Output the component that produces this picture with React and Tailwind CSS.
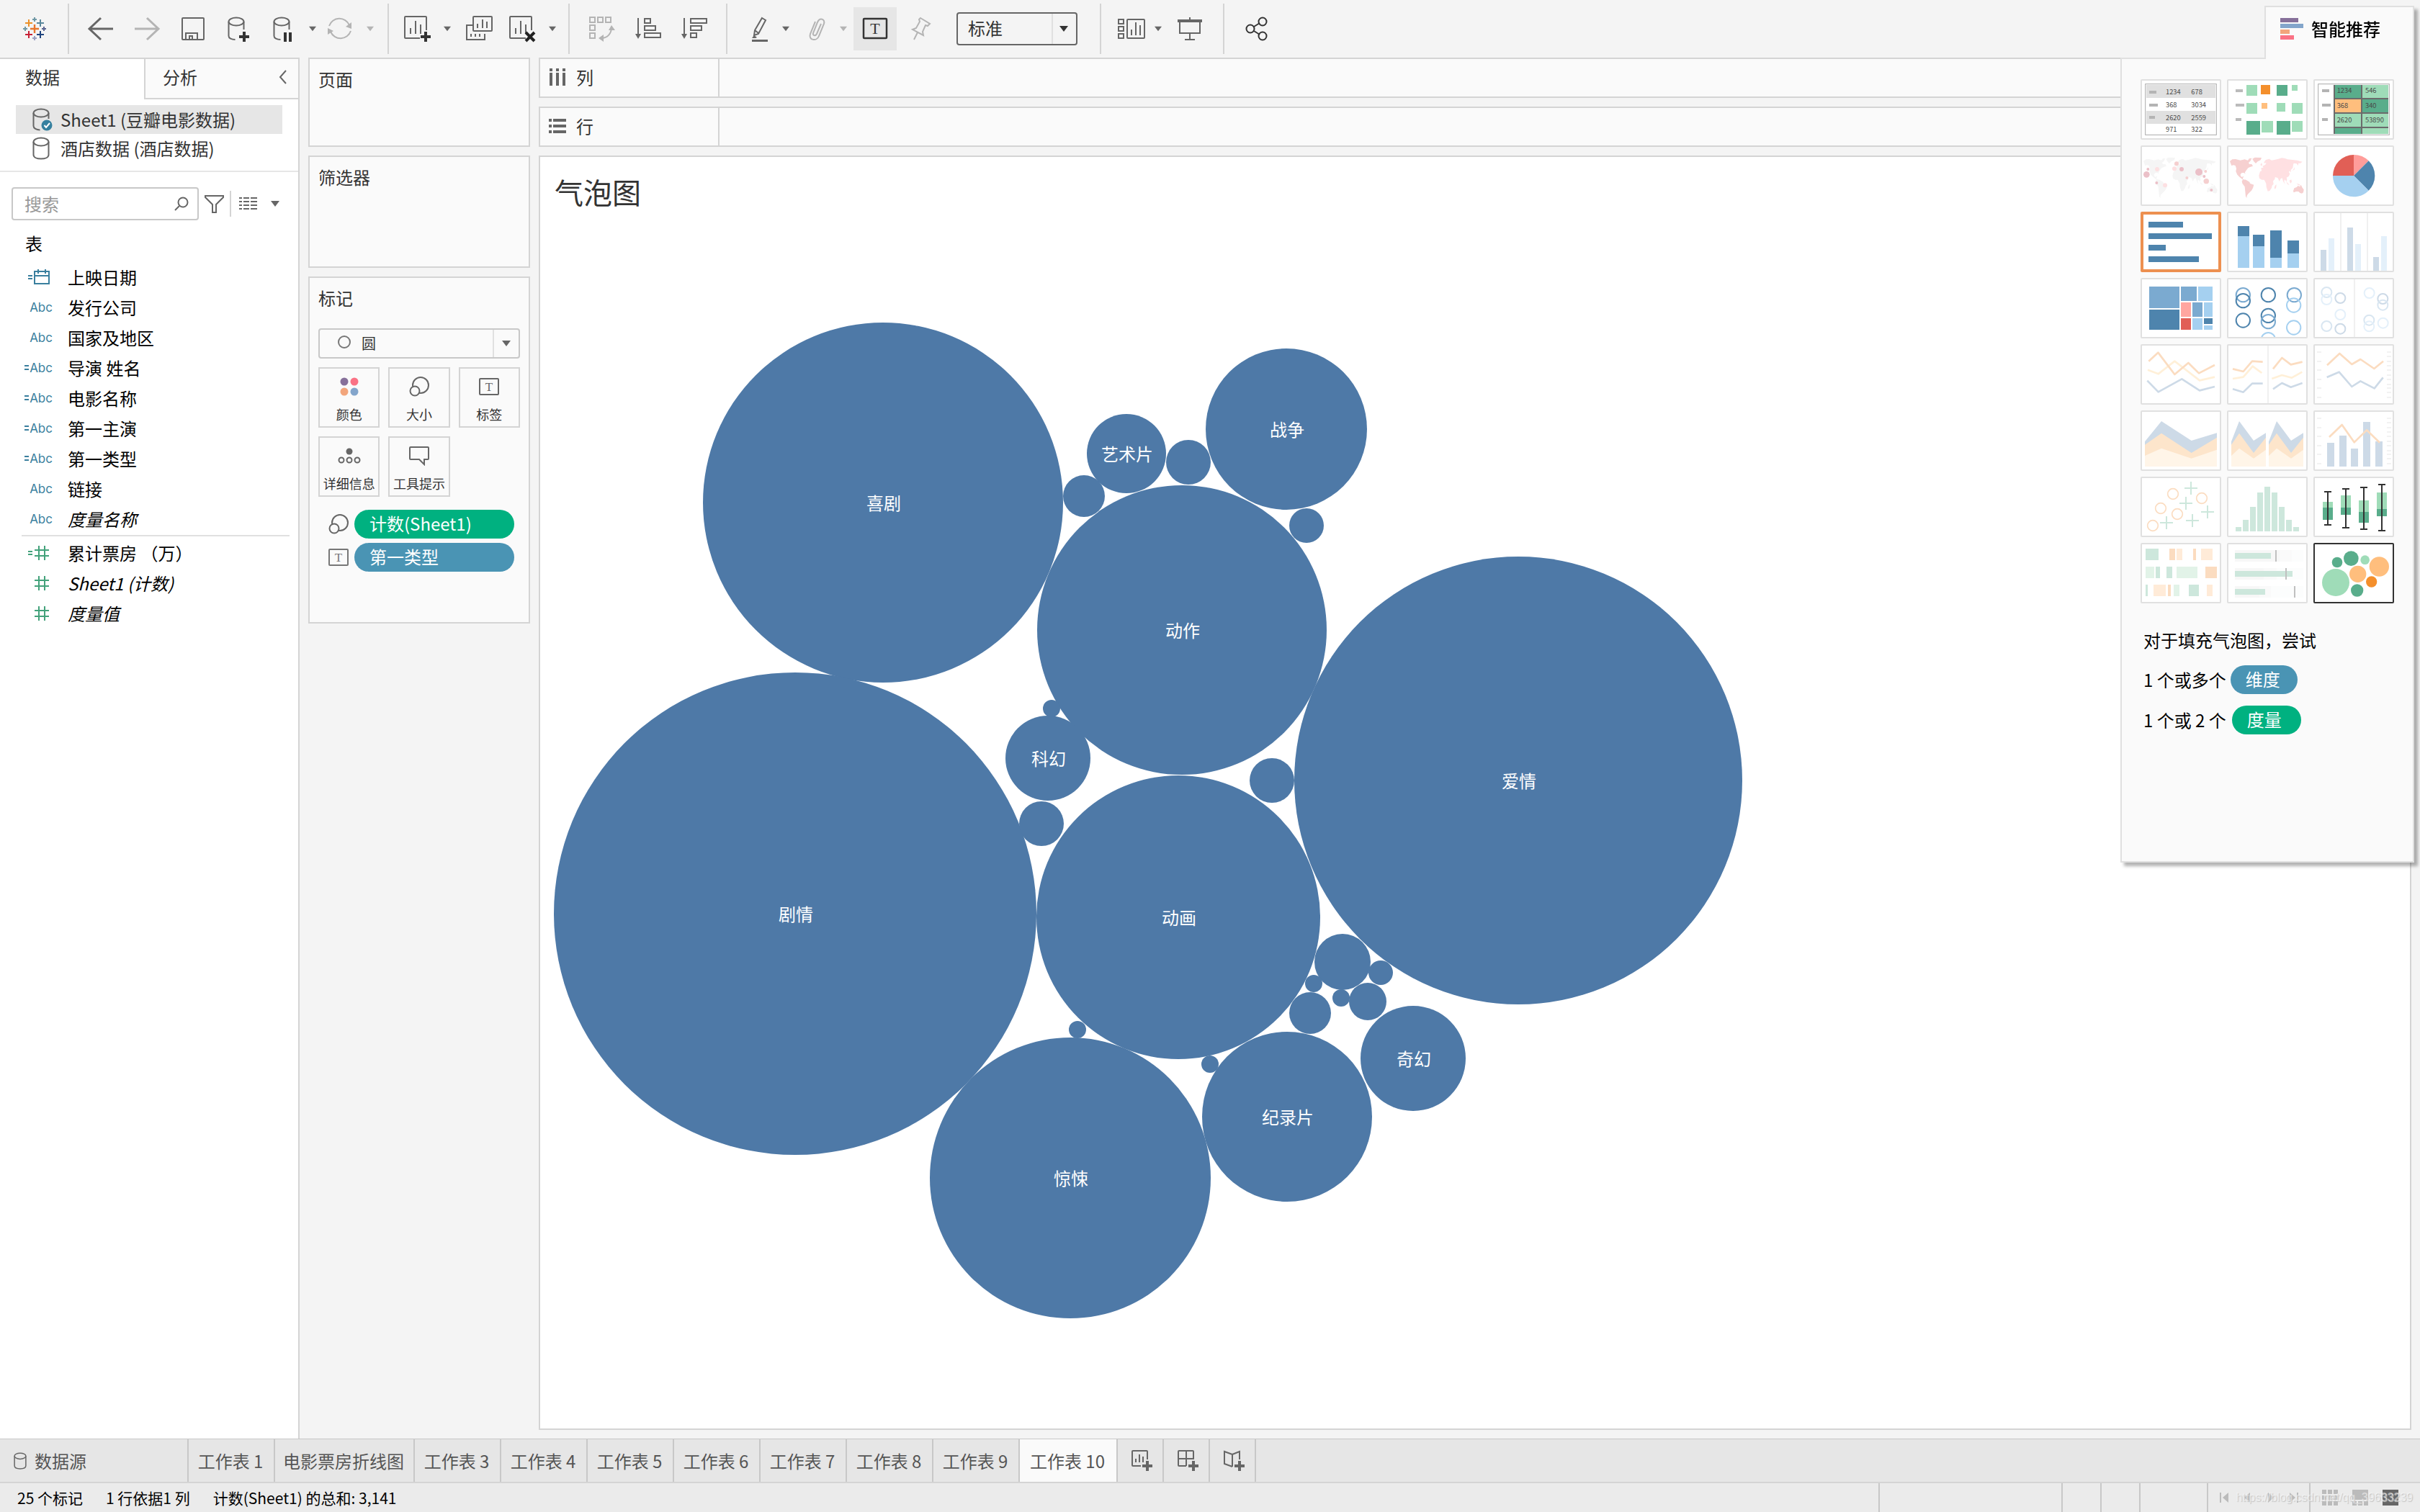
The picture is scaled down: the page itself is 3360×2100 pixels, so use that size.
import React, { useState } from 'react'

const bubbles = [
  { x: 1226, y: 698, r: 250, label: '喜剧' },
  { x: 1104, y: 1269, r: 335, label: '剧情' },
  { x: 1641, y: 875, r: 201, label: '动作' },
  { x: 1636, y: 1274, r: 197, label: '动画' },
  { x: 2108, y: 1084, r: 311, label: '爱情' },
  { x: 1455, y: 1053, r: 59, label: '科幻' },
  { x: 1962, y: 1470, r: 73, label: '奇幻' },
  { x: 1787, y: 1551, r: 118, label: '纪录片' },
  { x: 1486, y: 1636, r: 195, label: '惊悚' },
  { x: 1786, y: 596, r: 112, label: '战争' },
  { x: 1564, y: 630, r: 55, label: '艺术片' },
  { x: 1460, y: 984, r: 12 },
  { x: 1446, y: 1144, r: 31 },
  { x: 1766, y: 1084, r: 31 },
  { x: 1864, y: 1336, r: 39 },
  { x: 1917, y: 1351, r: 17 },
  { x: 1899, y: 1391, r: 26 },
  { x: 1824, y: 1366, r: 12 },
  { x: 1862, y: 1386, r: 12 },
  { x: 1819, y: 1407, r: 29 },
  { x: 1496, y: 1430, r: 12 },
  { x: 1680, y: 1478, r: 12 },
  { x: 1505, y: 689, r: 29 },
  { x: 1650, y: 642, r: 31 },
  { x: 1814, y: 730, r: 24 },
]

const dimensions = [
  { name: '上映日期', type: 'date', calc: true },
  { name: '发行公司', type: 'text' },
  { name: '国家及地区', type: 'text' },
  { name: '导演 姓名', type: 'text', calc: true },
  { name: '电影名称', type: 'text', calc: true },
  { name: '第一主演', type: 'text', calc: true },
  { name: '第一类型', type: 'text', calc: true },
  { name: '链接', type: 'text' },
  { name: '度量名称', type: 'text', italic: true },
]

const measures = [
  { name: '累计票房 （万）', type: 'number', calc: true },
  { name: 'Sheet1 (计数)', type: 'number', italic: true },
  { name: '度量值', type: 'number', italic: true },
]

const sheets = [
  '工作表 1', '电影票房折线图', '工作表 3', '工作表 4', '工作表 5',
  '工作表 6', '工作表 7', '工作表 8', '工作表 9', '工作表 10',
]

/* ---------- Icons ---------- */

const Icon = ({ children, className = 'text-[#666]', sw = 2 }) => (
  <svg
    width="40"
    height="40"
    viewBox="0 0 40 40"
    fill="none"
    stroke="currentColor"
    strokeWidth={sw}
    className={`overflow-visible shrink-0 ${className}`}
    aria-hidden="true"
  >
    {children}
  </svg>
)

const Plus = ({ x, y, color = '#333' }) => (
  <path d={`M${x - 7} ${y}h14M${x} ${y - 7}v14`} stroke={color} strokeWidth="4" />
)

const Caret = ({ className = 'text-[#666]' }) => (
  <svg width="12" height="8" viewBox="0 0 12 8" className={`shrink-0 ${className}`} aria-hidden="true">
    <path d="M0 0h12L6 8z" fill="currentColor" />
  </svg>
)

const Logo = () => (
  <svg width="32" height="32" viewBox="0 0 32 32" fill="none" aria-hidden="true">
    <path d="M10 16h12M16 10v12" stroke="#e8762c" strokeWidth="2.4" />
    <path d="M3 8h10M8 3v10" stroke="#eb9129" strokeWidth="2" />
    <path d="M19 8h10M24 3v10" stroke="#59879b" strokeWidth="2" />
    <path d="M3 24h10M8 19v10" stroke="#c72035" strokeWidth="2" />
    <path d="M19 24h10M24 19v10" stroke="#1f447e" strokeWidth="2" />
    <path d="M13 3h6M16 0v6" stroke="#7099a6" strokeWidth="2" />
    <path d="M13 29h6M16 26v6" stroke="#9a9fc0" strokeWidth="2" />
    <path d="M0 16h6M3 13v6" stroke="#7099a6" strokeWidth="2" />
    <path d="M26 16h6M29 13v6" stroke="#5b6591" strokeWidth="2" />
  </svg>
)

const DbIcon = ({ checked, small }) => (
  <svg
    width={small ? 18 : 28}
    height={small ? 24 : 32}
    viewBox={small ? '0 0 24 32' : '0 0 28 32'}
    fill="none"
    stroke="#666"
    strokeWidth="2"
    className="shrink-0"
    aria-hidden="true"
  >
    <ellipse cx="12" cy="7" rx="10.500" ry="5.500" />
    {checked ? (
      <>
        <path d="M1.500 7v18c0 3 4 5.500 9 5.500M22.500 7v8" />
        <circle cx="20" cy="24" r="7.500" fill="#35809f" stroke="none" />
        <path d="M16.500 24l2.500 3 5-6" stroke="#fff" />
      </>
    ) : (
      <path d="M1.500 7v18c0 3.500 4.500 5.500 10.500 5.500s10.500-2 10.500-5.500V7" />
    )}
  </svg>
)

const SizeIcon = () => (
  <svg width="28" height="28" viewBox="0 0 28 28" fill="none" stroke="#666" strokeWidth="2" aria-hidden="true">
    <circle cx="16" cy="12" r="11" />
    <circle cx="8" cy="20" r="6.500" fill="#fafafa" />
  </svg>
)

const TextIcon = ({ color = '#666' }) => (
  <svg width="28" height="28" viewBox="0 0 28 28" fill="none" stroke={color} strokeWidth="2" aria-hidden="true">
    <rect x="1" y="3" width="26" height="22" rx="1" />
    <text x="14" y="20" textAnchor="middle" fontSize="17" fontFamily="Liberation Serif, serif" fill={color} stroke="none">T</text>
  </svg>
)

const Bars = ({ x = 0, y = 0 }) => (
  <path d={`M${x} ${y + 10}v8M${x + 7} ${y}v18M${x + 14} ${y + 5}v13`} />
)

/* ---------- Toolbar ---------- */

const Tool = ({ label, children, disabled }) => (
  <button aria-label={label} disabled={disabled} className="w-16 h-15 flex items-center justify-center shrink-0">
    {children}
  </button>
)

const Drop = ({ label, disabled, className = 'w-3' }) => (
  <button
    aria-label={label}
    disabled={disabled}
    className={`h-15 flex items-center justify-center shrink-0 ${className}`}
  >
    <Caret className={disabled ? 'text-[#b4b4b4] w-[10px]' : 'text-[#666] w-[10px]'} />
  </button>
)

const Sep = ({ className = '' }) => (
  <span className={`w-[2px] h-[70px] bg-[#d4d4d4] shrink-0 ${className}`} />
)

const Toolbar = () => (
  <header className="h-20 flex items-center pl-8 shrink-0">
    <Logo />
    <Sep className="ml-[30px] mr-3" />
    <Tool label="后退">
      <Icon sw={3}><path d="M37 20H4M20 5L4 20l16 15" /></Icon>
    </Tool>
    <Tool label="前进" disabled>
      <Icon sw={3} className="text-[#b4b4b4]"><path d="M3 20h33M20 5l16 15-16 15" /></Icon>
    </Tool>
    <Tool label="保存">
      <Icon><rect x="5" y="5" width="30" height="30" rx="1" /><path d="M10 35v-9h16v9M15 35v-5h4v5" /></Icon>
    </Tool>
    <Tool label="新建数据源">
      <Icon>
        <ellipse cx="16" cy="10" rx="10.500" ry="5.500" />
        <path d="M5.500 10v20c0 3 4 5 9 5M26.500 10v11" />
        <Plus x={27} y={31} />
      </Icon>
    </Tool>
    <Tool label="暂停自动更新">
      <Icon>
        <ellipse cx="15" cy="10" rx="10.500" ry="5.500" />
        <path d="M4.500 10v20c0 3 4 5 9 5M25.500 10v11" />
        <path d="M20 25v13M27 25v13" stroke="#333" strokeWidth="4" />
      </Icon>
    </Tool>
    <Drop label="更新选项" />
    <Tool label="运行更新" disabled>
      <Icon className="text-[#b4b4b4]">
        <path d="M5 16a15 15 0 0 1 28-1M35 23a15 15 0 0 1-28 1" />
        <path d="M36 11v9l-8-3zM3 28v-9l8 4z" fill="currentColor" stroke="none" />
      </Icon>
    </Tool>
    <Drop label="运行选项" disabled className="w-5" />
    <Sep className="ml-[14px] mr-[5px]" />
    <Tool label="新建工作表">
      <Icon>
        <path d="M26 33H6a1 1 0 0 1-1-1V4a1 1 0 0 1 1-1h28a1 1 0 0 1 1 1v18" />
        <Bars x={13} y={9} />
        <Plus x={34} y={31} />
      </Icon>
    </Tool>
    <Drop label="新建选项" className="w-6" />
    <Tool label="复制工作表">
      <Icon>
        <rect x="12" y="3" width="26" height="20" rx="1" />
        <path d="M12 15H3v20h25V27M18 13v6M25 7v12M31 10v9M9 27v4M15 27v4M21 27v4" />
      </Icon>
    </Tool>
    <Tool label="清除工作表">
      <Icon>
        <path d="M21 33H0a1 1 0 0 1-1-1V4a1 1 0 0 1 1-1h28a1 1 0 0 1 1 1v18" />
        <Bars x={7} y={9} />
        <path d="M21 25l12 12M33 25L21 37" stroke="#222" strokeWidth="4" />
      </Icon>
    </Tool>
    <Drop label="清除选项" />
    <Sep className="ml-4 mr-[13px]" />
    <Tool label="交换行和列" disabled>
      <Icon className="text-[#b4b4b4]">
        <path d="M3 4h7v7H3zM14 4h7v7h-7zM25 4h7v7h-7zM3 15h7v7H3zM3 26h7v7H3zM33 18c0 9-6 15-14 15" />
        <path d="M33 15l5 7H29zM15 33l7-5v10z" fill="currentColor" stroke="none" />
      </Icon>
    </Tool>
    <Tool label="升序排序">
      <Icon>
        <path d="M6 5v24M15 6h8v6h-8zM15 16h15v6H15zM15 26h22v6H15z" />
        <path d="M2 27h8l-4 7z" fill="currentColor" stroke="none" />
      </Icon>
    </Tool>
    <Tool label="降序排序">
      <Icon>
        <path d="M6 5v24M15 6h22v6H15zM15 16h15v6H15zM15 26h8v6h-8z" />
        <path d="M2 27h8l-4 7z" fill="currentColor" stroke="none" />
      </Icon>
    </Tool>
    <Sep className="ml-3 mr-[11px]" />
    <Tool label="突出显示">
      <Icon>
        <path d="M25 5l5 3-10 19-6 2 1-7zM15 22l5 4" />
        <path d="M11 33l3-4 4 3-2 1z" fill="currentColor" stroke="none" />
        <path d="M11 36.500h22" strokeWidth="3" />
      </Icon>
    </Tool>
    <Drop label="突出显示选项" />
    <Tool label="组成员" disabled>
      <Icon className="text-[#b4b4b4]">
        <path d="M31 13l-6 14c-2 4-6 2-5-1l6-15c3-7 11-5 9 2l-7 17c-3 8-15 6-12-3l7-17" />
      </Icon>
    </Tool>
    <Drop label="组选项" disabled className="w-5" />
    <button aria-label="显示标记标签" aria-pressed="true" className="w-15 h-15 ml-1 bg-[#e6e6e6] flex items-center justify-center shrink-0">
      <Icon className="text-[#333]">
        <rect x="4" y="6" width="32" height="27" rx="1" strokeWidth="2.500" />
        <text x="20" y="27" textAnchor="middle" fontSize="22" fontFamily="Liberation Serif, serif" fill="currentColor" stroke="none">T</text>
      </Icon>
    </button>
    <Tool label="固定轴" disabled>
      <Icon className="text-[#b4b4b4]">
        <path d="M21 5l13 8-3 3-3-1-4 9 1 5-15-8 5-2 5-9-1-3zM17 25l-5 10" />
      </Icon>
    </Tool>
    <div className="relative ml-[19px] w-[168px] h-[46px] shrink-0">
      <select
        aria-label="适合"
        className="appearance-none w-full h-full border-2 border-[#666] rounded-sm pl-[14px] pb-[2px] text-2xl leading-8 text-[#333] bg-[#f4f4f4]"
      >
        <option>标准</option>
        <option>整个视图</option>
      </select>
      <span className="absolute right-[34px] top-[2px] bottom-[2px] w-[2px] bg-[#e0e0e0] pointer-events-none" />
      <Caret className="absolute right-3 top-[19px] w-[14px] text-[#333] pointer-events-none" />
    </div>
    <Sep className="ml-[31px] mr-[9px]" />
    <Tool label="显示卡">
      <Icon>
        <path d="M3 7h7v6H3zM3 17h7v6H3zM3 27h7v6H3zM21 21v8M27 11v18M33 15v14" />
        <rect x="15" y="7" width="24" height="26" rx="1" />
      </Icon>
    </Tool>
    <Drop label="卡选项" />
    <span className="w-[6px] shrink-0" />
    <Tool label="演示模式">
      <Icon>
        <path d="M6 10v16h28V10M20 26v9M13 35h14M20 4v4" />
        <path d="M3 9h34" strokeWidth="4" />
      </Icon>
    </Tool>
    <Sep className="ml-[14px] mr-[13px]" />
    <Tool label="共享">
      <Icon className="text-[#333]">
        <circle cx="28" cy="10" r="5.500" />
        <circle cx="11" cy="20" r="5.500" />
        <circle cx="28" cy="30" r="5.500" />
        <path d="M16 17l8-5M16 23l8 5" />
      </Icon>
    </Tool>
  </header>
)

/* ---------- Data pane ---------- */

const FieldIcon = ({ type, calc }) => {
  if (type === 'text') {
    return (
      <span className="w-[73px] flex items-center justify-end text-[17px] leading-6 font-[Inter,sans-serif] text-[#3a7f9e]">
        {calc && <svg width="7" height="8" aria-hidden="true"><path d="M0 1h6M0 6h6" stroke="#3a7f9e" strokeWidth="2" /></svg>}
        Abc
      </span>
    )
  }
  const color = type === 'date' ? '#3a7f9e' : '#43a27b'
  return (
    <span className="w-[73px] flex justify-end pr-1">
      <svg width="32" height="24" viewBox="0 0 32 24" fill="none" stroke={color} strokeWidth="2" aria-hidden="true">
        {calc && <path d="M2 10h6M2 14h6" />}
        {type === 'date' ? (
          <path d="M11 4h20v17H11zM11 10h20M16 1v6M26 1v6" />
        ) : (
          <path d="M11 8h20M11 16h20M17 2v20M25 2v20" />
        )}
      </svg>
    </span>
  )
}

const FieldList = ({ fields }) => (
  <ul>
    {fields.map((f) => (
      <li key={f.name} className="h-[42px] flex items-center gap-[21px] text-2xl leading-8 text-black whitespace-nowrap">
        <FieldIcon type={f.type} calc={f.calc} />
        <span className={f.italic ? 'italic' : ''}>{f.name}</span>
      </li>
    ))}
  </ul>
)

const DataPane = () => (
  <aside className="w-[416px] shrink-0 bg-white border-t-2 border-r-2 border-[#d4d4d4] text-2xl leading-8 text-[#333]">
    <div className="flex h-14">
      <button className="w-[200px] pl-[35px] pb-[6px] text-left">数据</button>
      <button className="flex-1 flex items-center justify-between pl-6 pr-4 pb-1 bg-[#fafafa] border-l-2 border-b-2 border-[#d4d4d4]">
        分析
        <svg width="12" height="20" fill="none" stroke="#666" strokeWidth="2" aria-hidden="true"><path d="M11 1L3 10l8 9" /></svg>
      </button>
    </div>
    <ul className="mt-2 ml-[22px] mr-[22px]">
      <li className="h-10 flex items-center gap-[11px] pl-[23px] bg-[#e6e6e6]"><DbIcon checked />Sheet1 (豆瓣电影数据)</li>
      <li className="h-10 flex items-center gap-[11px] pl-[23px]"><DbIcon />酒店数据 (酒店数据)</li>
    </ul>
    <div className="mt-[11px] h-[2px] bg-[#e6e6e6]" />
    <div className="mt-[21px] flex items-center pl-4">
      <label className="relative w-[260px] h-[46px]">
        <input
          aria-label="搜索"
          placeholder="搜索"
          className="w-full h-full border-2 border-[#c8c8c8] rounded-sm pl-4 pb-[2px] bg-white placeholder:text-[#999]"
        />
        <svg width="20" height="20" fill="none" stroke="#666" strokeWidth="2" className="absolute right-[14px] top-[13px]" aria-hidden="true">
          <circle cx="12" cy="8" r="6.500" /><path d="M7 13l-6 6" />
        </svg>
      </label>
      <button aria-label="筛选" className="ml-2">
        <svg width="27" height="26" fill="none" stroke="#666" strokeWidth="2" aria-hidden="true">
          <path d="M1 2h25v2L16 14v11h-5V14L1 4z" />
        </svg>
      </button>
      <span className="w-[2px] h-9 bg-[#d4d4d4] ml-2" />
      <button aria-label="视图" className="ml-[11px]">
        <svg width="25" height="20" fill="none" stroke="#666" strokeWidth="2" aria-hidden="true">
          <path d="M0 2h25M0 7h25M0 12h25M0 17h25" strokeDasharray="4 2 8 2 9 0" />
        </svg>
      </button>
      <button aria-label="视图选项" className="ml-[18px]"><Caret className="w-[14px] text-[#666]" /></button>
    </div>
    <h2 className="pl-[35px] mt-4 mb-[10px] text-black">表</h2>
    <FieldList fields={dimensions} />
    <div className="ml-[30px] mr-3 mt-px mb-[2px] h-[2px] bg-[#e0e0e0]" />
    <FieldList fields={measures} />
  </aside>
)

/* ---------- Cards ---------- */

const Card = ({ title, className, children }) => (
  <section className={`bg-[#fafafa] border-2 border-[#d4d4d4] px-3 pt-3 ${className}`}>
    <h2 className="text-2xl leading-8 text-[#333]">{title}</h2>
    {children}
  </section>
)

const MarkButton = ({ label, children }) => (
  <button className="h-[84px] border-2 border-[#d4d4d4] flex flex-col items-center pt-[10px] text-lg leading-6 text-[#333] whitespace-nowrap">
    <span className="h-[30px] mb-[11px] flex items-center">{children}</span>
    {label}
  </button>
)

const Cards = () => (
  <div className="w-[332px] shrink-0 px-3 flex flex-col gap-3">
    <Card title="页面" className="h-[124px]" />
    <Card title="筛选器" className="h-[156px]" />
    <Card title="标记" className="h-[482px]">
      <div className="relative mt-[26px] h-[42px]">
        <select
          aria-label="标记类型"
          className="appearance-none w-full h-full border-2 border-[#c8c8c8] rounded-sm pl-[58px] text-xl leading-6 text-[#333] bg-[#fafafa]"
        >
          <option>圆</option>
          <option>条形图</option>
        </select>
        <span className="absolute left-[27px] top-[10px] size-[18px] rounded-full border-2 border-[#777] pointer-events-none" />
        <span className="absolute right-[36px] top-[2px] bottom-[2px] w-[2px] bg-[#e0e0e0] pointer-events-none" />
        <Caret className="absolute right-3 top-[17px] w-[14px] text-[#666] pointer-events-none" />
      </div>
      <div className="mt-3 grid grid-cols-3 gap-3">
        <MarkButton label="颜色">
          <svg width="26" height="26" aria-hidden="true">
            <circle cx="6" cy="6" r="5.500" fill="#86709a" />
            <circle cx="20" cy="6" r="5.500" fill="#fa7285" />
            <circle cx="6" cy="20" r="5.500" fill="#f2a57c" />
            <circle cx="20" cy="20" r="5.500" fill="#83a5cb" />
          </svg>
        </MarkButton>
        <MarkButton label="大小"><SizeIcon /></MarkButton>
        <MarkButton label="标签"><TextIcon /></MarkButton>
        <MarkButton label="详细信息">
          <svg width="32" height="22" fill="none" stroke="#666" strokeWidth="2" aria-hidden="true">
            <circle cx="16" cy="5" r="4.500" fill="#666" stroke="none" />
            <circle cx="5" cy="17" r="3.500" /><circle cx="16" cy="17" r="3.500" /><circle cx="27" cy="17" r="3.500" />
          </svg>
        </MarkButton>
        <MarkButton label="工具提示">
          <svg width="28" height="28" fill="none" stroke="#666" strokeWidth="2" aria-hidden="true">
            <path d="M2 2h24a1 1 0 0 1 1 1v15a1 1 0 0 1-1 1h-5v7l-7-7H2a1 1 0 0 1-1-1V3a1 1 0 0 1 1-1z" />
          </svg>
        </MarkButton>
      </div>
      <ul className="mt-[18px] ml-[14px] mr-2 flex flex-col gap-[6px] text-2xl leading-8 text-white">
        <li className="flex items-center gap-2">
          <SizeIcon />
          <span className="flex-1 h-10 rounded-full bg-[#00b180] pl-[21px] pt-[3px]">计数(Sheet1)</span>
        </li>
        <li className="flex items-center gap-2">
          <TextIcon color="#777" />
          <span className="flex-1 h-10 rounded-full bg-[#4a94b4] pl-[21px] pt-[3px]">第一类型</span>
        </li>
      </ul>
    </Card>
  </div>
)

/* ---------- Shelves and view ---------- */

const Shelf = ({ label, children }) => (
  <div className="h-14 flex bg-[#fafafa] border-2 border-[#d4d4d4] text-2xl leading-8 text-[#333]">
    <div className="w-[249px] flex items-center gap-[14px] pl-3 pb-[2px] border-r-2 border-[#d4d4d4]">
      <svg width="24" height="24" fill="#666" aria-hidden="true">{children}</svg>
      {label}
    </div>
  </div>
)

const BubbleChart = () => (
  <svg
    width="1660"
    height="1390"
    viewBox="765 445 1660 1390"
    role="img"
    aria-label="气泡图"
    className="block ml-[15px]"
  >
    {bubbles.map((b) => (
      <circle key={`${b.x}-${b.y}`} cx={b.x} cy={b.y} r={b.r} fill="#4e79a7" />
    ))}
    {bubbles.filter((b) => b.label).map((b) => (
      <text key={b.label} x={b.x + 1} y={b.y + 10} textAnchor="middle" fontSize="24" fill="#fff">
        {b.label}
      </text>
    ))}
  </svg>
)

const Worksheet = () => (
  <main className="flex-1 min-w-0 flex flex-col gap-3 pr-3 pb-3">
    <Shelf label="列">
      <path d="M1 0h4v4H1zM1 6h4v18H1zM10 0h4v4h-4zM10 6h4v18h-4zM19 0h4v4h-4zM19 6h4v18h-4z" />
    </Shelf>
    <Shelf label="行">
      <path d="M0 2h4v4H0zM6 2h18v4H6zM0 10h4v4H0zM6 10h18v4H6zM0 18h4v4H0zM6 18h18v4H6z" />
    </Shelf>
    <section className="flex-1 bg-white border-2 border-[#d4d4d4] pt-5">
      <h1 className="pl-5 text-[40px] leading-[56px] text-[#333]">气泡图</h1>
      <div className="mt-[151px]"><BubbleChart /></div>
    </section>
  </main>
)

/* ---------- Show me ---------- */

// every thumbnail is drawn on a 336 x 252 grid
const G = '#9fdcb8'
const DG = '#59ad8b'
const O = '#ffbe7d'
const DO = '#f48f2c'
const B = '#4e84ad'
const MB = '#7baad0'
const LB = '#a5d0f0'
const FB = '#cddae7'
const FO = '#fbdcc0'
const FY = '#fff0d8'
const FG = '#cde7dc'

const Rects = ({ data }) => data.map(([x, y, w, h, fill], i) => (
  <rect key={i} x={x} y={y} width={w} height={h} fill={fill} />
))

const Rings = ({ data, r, sw }) => data.map(([x, y, color], i) => (
  <circle key={i} cx={x} cy={y} r={r} fill="none" stroke={color} strokeWidth={sw} />
))

const Lines = ({ data }) => data.map(([points, color], i) => (
  <polyline key={i} points={points} fill="none" stroke={color} strokeWidth="8" strokeLinejoin="round" />
))

const Labels = ({ data }) => data.map(([x, y, t]) => (
  <text key={t} x={x} y={y} fontSize="28" fill="#4a4a4a">{t}</text>
))

const Divider = ({ x }) => <path d={`M${x} 0v252`} stroke="#f0f0f0" strokeWidth="6" />

const Ticks = () => (
  <g fill="#f2f2f2">
    {[33, 72, 108, 147, 183, 222].map((y) => <rect key={y} x="15" y={y - 3} width="18" height="6" />)}
    {[33, 51, 72, 90, 108, 129, 147, 168, 183, 201, 222].map((y) => (
      <rect key={y} x="306" y={y - 3} width="18" height="6" />
    ))}
  </g>
)

const World = ({ a, b }) => (
  <>
    <g fill={a}>
      <path d="M12 66l10-8 14-1 20 5 18-4 12 4 8-6 6 6-10 10 3 6 10 0 5 8-12 4-8 4-8 10-5 8 1 8-4-6-10 0-6 6 1 8 6 4 5-4 1 4-4 4 3 6 6 2 5-2-2 6-12-6-12-10-10-10-6-14 2-12-4-12-8-2-8 2z" />
      <path d="M88 58l8-5 8 2-6 6zM106 56l10-6 28 1-4 10-12 6-8 8-8-8z" />
      <path d="M62 148l6-6 12 2 14 8 2 6 16 6-4 14-6 10-8 8-8 8-4 8 2 6-6-4-2-22-2-20-10-14z" />
      <path d="M276 190l4-12 10-4 6-6 8 4 4-8 6 12 6 8-2 12-6 4-8-2-6-6-10 0-10 4z" />
    </g>
    <g fill={b}>
      <path d="M144 104l-2-10 10-2-4-6 12-6 4-8-8 2-2-4 8-10 14-4 10 6 12-2 16-4 14-4 14 2 10 4 40 4 22 6-8 6-8 0-2 10-6-8-12-2-2 6-2 14-8 8 0 10-6-6-2 6 4 6-4 10-10 6 2 8-2 8-8-8-2 8 4 12-8-12-4-14-6 2-6 12-6-14-10-4-8 2 6 6-14 10-10-18-2-8-14-2-8-6-8 2z" />
      <path d="M138 108l16-5 8 4 18 2 8 12 6 12 8 0-10 16 2 12-6 6-2 10-8 12-8 2-6-18-1-14-4-8-4-8-10 0-10-6-2-12z" />
      <path d="M200 168l6-6-1 12-4 8-4-4zM139 80l5-8 3 8-3 6zM246 148l6 8 8 8-8-2zM260 146l8-4 2 10-6 6zM272 106l6-8 2-8 2 10zM290 158l12 4 4 6-10-4z" />
    </g>
  </>
)

const AreaBand = ({ d1, d2, d3 }) => (
  <>
    <path d={d1} fill={FB} />
    <path d={d2} fill="#fde5cb" />
    <path d={d3} fill="#fff5e8" />
  </>
)

const thumbs = [
  { name: '文本表', art: (
    <>
      <rect x="20" y="20" width="296" height="212" fill="none" stroke="#aaa" strokeWidth="3" />
      <Rects data={[[24, 24, 288, 54, '#e0e0e0'], [24, 132, 288, 54, '#e0e0e0'], [36, 48, 30, 12, '#b4b4b4'], [36, 102, 36, 12, '#b4b4b4'], [36, 153, 24, 12, '#b4b4b4']]} />
      <Labels data={[[105, 62, '1234'], [211, 62, '678'], [105, 116, '368'], [211, 116, '3034'], [105, 170, '2620'], [211, 170, '2559'], [105, 218, '971'], [211, 218, '322']]} />
    </>
  ) },
  { name: '热图', art: (
    <Rects data={[
      [81, 24, 45, 45, G], [141, 24, 39, 39, DO], [207, 24, 45, 45, DG], [270, 24, 24, 24, G],
      [81, 99, 45, 45, G], [144, 99, 24, 24, O], [207, 99, 36, 36, G], [270, 99, 45, 45, G],
      [81, 174, 57, 57, DG], [144, 174, 48, 48, G], [207, 174, 57, 57, DG], [270, 174, 45, 45, G],
      [36, 42, 30, 12, '#bbb'], [36, 102, 36, 12, '#bbb'], [36, 162, 24, 12, '#bbb'],
    ]} />
  ) },
  { name: '突出显示表', art: (
    <>
      <rect x="20" y="20" width="296" height="212" fill="none" stroke="#aaa" strokeWidth="3" />
      <Rects data={[
        [84, 24, 228, 204, '#6b6b6b'],
        [90, 24, 108, 54, DG], [204, 24, 108, 54, G], [90, 84, 108, 54, O], [204, 84, 108, 54, DG],
        [90, 144, 108, 54, G], [204, 144, 108, 54, G], [90, 204, 108, 24, DG], [204, 204, 108, 24, G],
        [36, 42, 30, 12, '#b4b4b4'], [36, 102, 36, 12, '#b4b4b4'], [36, 162, 24, 12, '#b4b4b4'],
      ]} />
      <Labels data={[[98, 58, '1234'], [216, 58, '546'], [98, 120, '368'], [216, 120, '340'], [98, 180, '2620'], [216, 180, '53890']]} />
    </>
  ) },
  { name: '符号地图', art: (
    <>
      <World a="#f5f5f5" b="#f5f5f5" />
      {[
        [31, 99, 6, '#ebc0c8'], [25, 121, 13, '#ebc0c8'], [69, 99, 9, '#fde0e2'], [150, 76, 9, '#f5cfcf'],
        [141, 97, 9, '#fde0e2'], [171, 99, 9, '#ebc0c8'], [193, 135, 6, '#f5cfcf'], [243, 111, 15, '#ebc0c8'],
        [271, 108, 6, '#f5cfcf'], [265, 129, 6, '#ebc0c8'], [274, 149, 11, '#f5cfcf'], [67, 156, 6, '#ebc0c8'],
        [102, 166, 9, '#fde0e2'], [295, 186, 6, '#ebc0c8'],
      ].map(([x, y, r, fill]) => <circle key={`${x}-${y}`} cx={x} cy={y} r={r} fill={fill} />)}
    </>
  ) },
  { name: '地图', art: <World a="#f6d0d0" b="#ffe0e2" /> },
  { name: '饼图', art: (
    <>
      <path d="M168 126V39a87 87 0 0 1 62 25z" fill="#ff9d9a" />
      <path d="M168 126l62-62a87 87 0 0 1 0 124z" fill={B} />
      <path d="M168 126l62 62A87 87 0 0 1 81 126z" fill={LB} />
      <path d="M168 126H81a87 87 0 0 1 87-87z" fill="#e15f56" />
    </>
  ) },
  { name: '水平条', recommended: true, art: (
    <Rects data={[[33, 42, 144, 24, B], [33, 90, 264, 24, B], [33, 138, 72, 24, B], [33, 186, 210, 24, B]]} />
  ) },
  { name: '堆叠条', art: (
    <Rects data={[
      [45, 60, 48, 42, B], [45, 102, 48, 132, LB], [108, 96, 48, 48, B], [108, 144, 48, 90, LB],
      [180, 78, 48, 114, B], [180, 192, 48, 42, LB], [252, 120, 48, 54, B], [252, 174, 48, 60, LB],
    ]} />
  ) },
  { name: '并排条', art: (
    <>
      <Divider x={114} />
      <Divider x={225} />
      <Rects data={[
        [30, 159, 24, 87, FB], [63, 111, 24, 135, '#e4f0fa'], [141, 66, 24, 180, FB],
        [174, 135, 24, 111, '#e4f0fa'], [249, 189, 24, 57, FB], [282, 102, 24, 144, '#e4f0fa'],
      ]} />
    </>
  ) },
  { name: '树状图', art: (
    <Rects data={[
      [36, 36, 126, 90, MB], [168, 36, 66, 60, MB], [240, 36, 60, 60, LB], [36, 132, 126, 84, B],
      [168, 102, 42, 60, '#ffa6a0'], [216, 102, 42, 60, MB], [264, 102, 36, 60, LB],
      [168, 168, 42, 48, '#e15f56'], [216, 168, 42, 48, LB], [264, 168, 36, 24, B], [264, 198, 36, 18, LB],
    ]} />
  ) },
  { name: '圆视图', art: (
    <Rings r={29} sw={6} data={[
      [67, 71, MB], [67, 95, B], [67, 177, B], [172, 71, B], [172, 157, B], [172, 182, MB],
      [172, 257, LB], [280, 71, MB], [278, 114, LB], [278, 207, LB],
    ]} />
  ) },
  { name: '并排圆', art: (
    <>
      <Divider x={171} />
      <Rings r={21} sw={6} data={[
        [55, 60, '#d9e6f1'], [55, 90, '#e4f0fa'], [112, 84, FB], [112, 153, '#e4f0fa'], [55, 201, '#d9e6f1'],
        [112, 212, FB], [233, 63, '#e4f0fa'], [289, 87, FB], [289, 113, '#d9e6f1'], [232, 176, '#d9e6f1'],
        [232, 202, '#e4f0fa'], [290, 188, '#e4f0fa'],
      ]} />
    </>
  ) },
  { name: '线(连续)', art: (
    <Lines data={[
      ['30,107 74,124 142,71 246,151 309,137', FY],
      ['34,71 73,35 142,126 199,78 243,121 309,87', FO],
      ['28,152 74,199 172,145 246,193 309,177', FB],
    ]} />
  ) },
  { name: '线(离散)', art: (
    <>
      <Divider x={171} />
      <Lines data={[
        ['24,103 68,114 105,71 149,74', FO], ['192,103 229,57 266,85 314,74', FO],
        ['24,144 68,137 107,92 145,120', FY], ['187,144 229,129 270,140 313,116', FY],
        ['24,187 68,200 105,164 149,164', FB], ['192,187 229,162 266,179 314,162', FB],
      ]} />
    </>
  ) },
  { name: '双线', art: (
    <>
      <Ticks />
      <Lines data={[
        ['57,88 109,39 160,84 196,63 253,102 291,71', FO],
        ['56,138 107,116 160,177 196,154 254,184 290,139', FB],
      ]} />
    </>
  ) },
  { name: '面积图(连续)', art: (
    <AreaBand
      d1="M18 130L87 45l125 81 106-32v140H18z"
      d2="M18 143l69-48 125 82 106-64v121H18z"
      d3="M18 189l69-31 125 42 106-36v70H18z"
    />
  ) },
  { name: '面积图(离散)', art: (
    <AreaBand
      d1="M18 130l33-85 60 81 51-32v140H18zM174 130l33-85 60 81 51-32v140H174z"
      d2="M18 143l33-48 60 82 51-64v121H18zM174 143l33-48 60 82 51-64v121H174z"
      d3="M18 189l33-31 60 42 51-36v70H18zM174 189l33-31 60 42 51-36v70H174z"
    />
  ) },
  { name: '双组合', art: (
    <>
      <Ticks />
      <Rects data={[[57, 135, 30, 99, FB], [108, 105, 30, 129, FB], [156, 159, 30, 75, FB], [207, 48, 30, 186, FB], [258, 129, 30, 105, FB]]} />
      <Lines data={[['66,111 119,60 170,133 222,82 276,134', FO]]} />
    </>
  ) },
  { name: '散点图', art: (
    <>
      <Rings r={22} sw={5} data={[[135, 72, FO], [255, 90, FO], [84, 132, FO], [153, 156, FO], [51, 204, FO]]} />
      {[[210, 48], [189, 111], [279, 147], [216, 183], [108, 192]].map(([x, y]) => (
        <path key={x} d={`M${x - 27} ${y}h54M${x} ${y - 27}v54`} stroke={FG} strokeWidth="6" />
      ))}
    </>
  ) },
  { name: '直方图', art: (
    <Rects data={[18, 48, 102, 162, 186, 162, 102, 48, 18].map((h, i) => [36 + i * 30, 228 - h, 24, h, FG])} />
  ) },
  { name: '盒须图', art: (
    <>
      {[[60, 63, 105, 129, 180, 201], [135, 51, 78, 129, 159, 213], [210, 45, 99, 147, 192, 219], [285, 33, 66, 135, 165, 225]].map(
        ([x, top, q3, med, q1, bottom]) => (
          <g key={x}>
            <rect x={x - 21} y={q3} width="42" height={med - q3} fill={G} />
            <rect x={x - 21} y={med} width="42" height={q1 - med} fill={DG} />
            <path d={`M${x - 15} ${top}h30M${x} ${top}V${bottom}M${x - 15} ${bottom}h30`} stroke="#333" strokeWidth="6" />
          </g>
        )
      )}
    </>
  ) },
  { name: '甘特图', art: (
    <Rects data={[
      [21, 24, 54, 48, FG], [120, 24, 24, 48, FO], [150, 24, 24, 48, '#ffebd8'], [219, 24, 12, 48, FO], [252, 24, 48, 48, '#ffebd8'],
      [21, 99, 36, 48, '#e2f3e8'], [63, 99, 18, 48, FG], [108, 99, 24, 48, FG], [150, 99, 87, 48, '#e2f3e8'], [270, 99, 48, 48, FO],
      [21, 174, 9, 48, FG], [54, 174, 51, 48, '#ffebd8'], [114, 174, 12, 48, FO], [138, 174, 24, 48, '#e2f3e8'], [201, 174, 42, 48, FG], [276, 174, 24, 48, '#ffebd8'],
    ]} />
  ) },
  { name: '靶心图', art: (
    <Rects data={[
      [33, 30, 285, 48, '#fcfdfd'], [33, 30, 237, 48, '#fafafa'], [33, 30, 186, 48, '#f7f7f7'], [33, 42, 150, 24, FG], [201, 30, 6, 48, '#c0c0c0'],
      [33, 105, 285, 48, '#fcfdfd'], [33, 105, 174, 48, '#fafafa'], [33, 105, 120, 48, '#f7f7f7'], [33, 117, 240, 24, FG], [243, 105, 6, 48, '#c0c0c0'],
      [33, 180, 285, 48, '#fcfdfd'], [33, 180, 150, 48, '#fafafa'], [33, 180, 102, 48, '#f7f7f7'], [33, 192, 126, 24, FG], [279, 180, 6, 48, '#c0c0c0'],
    ]} />
  ) },
  { name: '填充气泡图', current: true, art: (
    <>
      {[
        [99, 81, 22, DG], [157, 65, 31, DG], [215, 71, 19, G], [274, 99, 41, O],
        [185, 130, 35, O], [242, 162, 23, DO], [93, 165, 57, G], [182, 198, 26, DG],
      ].map(([x, y, r, fill]) => <circle key={x} cx={x} cy={y} r={r} fill={fill} />)}
    </>
  ) },
]

const Thumb = ({ name, art, recommended, current }) => {
  let border = 'border-2 border-[#e0e0e0]'
  if (recommended) border = 'border-4 border-[#ed9050]'
  if (current) border = 'border-2 border-[#333]'
  return (
    <button aria-label={name} className={`h-[84px] bg-white rounded-xs overflow-hidden ${border}`}>
      <svg
        viewBox={recommended ? '12 12 312 228' : '6 6 324 240'}
        className="block w-full h-full"
        aria-hidden="true"
      >
        {art}
      </svg>
    </button>
  )
}

const ShowMe = () => (
  <div className="absolute top-2 right-2 w-[408px] flex flex-col items-end text-2xl leading-8 text-black drop-shadow-[5px_5px_2px_rgba(0,0,0,0.3)]">
    <button className="relative z-10 w-[208px] h-[74px] pl-5 pb-3 flex items-center gap-[11px] font-medium bg-[#fafafa] border-2 border-b-0 border-[#e0e0e0]">
      <svg width="32" height="30" aria-hidden="true">
        <rect width="25" height="6" fill="#86709a" />
        <rect y="8" width="32" height="6" fill="#83a5cb" />
        <rect y="16" width="13" height="6" fill="#f2a57c" />
        <rect y="24" width="19" height="6" fill="#fa7285" />
      </svg>
      智能推荐
    </button>
    <div className="-mt-[2px] w-full h-[1118px] px-[26px] pt-7 bg-[#fafafa] border-2 border-[#e0e0e0]">
      <div className="grid grid-cols-3 gap-2 w-[352px]">
        {thumbs.map((t) => <Thumb key={t.name} {...t} />)}
      </div>
      <p className="mt-[35px] ml-1">对于填充气泡图，尝试</p>
      <p className="mt-[19px] ml-1 h-10 flex items-center gap-[6px]">
        1 个或多个 <span className="h-10 px-6 pl-[21px] pt-[3px] rounded-full bg-[#4a94b4] text-white">维度</span>
      </p>
      <p className="mt-4 ml-1 h-10 flex items-center gap-2">
        1 个或 2 个 <span className="h-10 pr-[27px] pl-[21px] pt-[3px] rounded-full bg-[#00b180] text-white">度量</span>
      </p>
    </div>
  </div>
)

/* ---------- Footer ---------- */

const SheetTabs = () => {
  const [active, setActive] = useState('工作表 10')
  return (
    <nav className="h-[62px] shrink-0 flex bg-[#e6e6e6] border-t border-t-[#c8c8c8] border-b-2 border-b-[#d4d4d4] text-2xl leading-8 text-[#555]">
      <button className="w-[262px] pl-[19px] flex items-center gap-[11px] border-r-2 border-[#c8c8c8]">
        <DbIcon small />
        数据源
      </button>
      {sheets.map((s) => (
        <button
          key={s}
          onClick={() => setActive(s)}
          className={`pl-[11px] pr-[13px] border-r-2 border-[#c8c8c8] whitespace-nowrap ${
            s === active ? 'min-w-[136px] bg-[#fafafa]' : 'min-w-[120px]'
          }`}
        >
          {s}
        </button>
      ))}
      <button aria-label="新建工作表" className="w-16 pl-[6px] flex items-center justify-center border-r-2 border-[#c8c8c8]">
        <svg width="30" height="30" fill="none" stroke="#666" strokeWidth="2" aria-hidden="true">
          <path d="M13 22H2a1 1 0 0 1-1-1V2a1 1 0 0 1 1-1h19a1 1 0 0 1 1 1v11M6 12v5M11 6v11M16 9v8" />
          <Plus x={22} y={22} color="#666" />
        </svg>
      </button>
      <button aria-label="新建仪表板" className="w-16 pl-[6px] flex items-center justify-center border-r-2 border-[#c8c8c8]">
        <svg width="30" height="30" fill="none" stroke="#666" strokeWidth="2" aria-hidden="true">
          <path d="M12 22H2a1 1 0 0 1-1-1V2a1 1 0 0 1 1-1h19a1 1 0 0 1 1 1v10H1M12 1v21" />
          <Plus x={22} y={22} color="#666" />
        </svg>
      </button>
      <button aria-label="新建故事" className="w-16 pl-[6px] flex items-center justify-center border-r-2 border-[#c8c8c8]">
        <svg width="30" height="30" fill="none" stroke="#666" strokeWidth="2" aria-hidden="true">
          <path d="M12 23L1 19V2l11 4v17M12 6l10-4v11" />
          <Plus x={22} y={22} color="#666" />
        </svg>
      </button>
    </nav>
  )
}

const StatusBar = () => (
  <footer className="relative h-10 shrink-0 flex items-center bg-[#ebebeb] text-[21px] leading-6 text-black">
    <div className="flex-1 flex gap-8 pl-6 pb-px whitespace-nowrap">
      <span>25 个标记</span>
      <span>1 行依据1 列</span>
      <span>计数(Sheet1) 的总和: 3,141</span>
    </div>
    <span className="w-[254px] h-full border-l-2 border-[#c8c8c8]" />
    <span className="w-[54px] h-full border-l-2 border-[#c8c8c8]" />
    <span className="w-[54px] h-full border-l-2 border-[#c8c8c8]" />
    <span className="w-[94px] h-full border-l-2 border-[#c8c8c8]" />
    <div className="w-[142px] h-full flex items-center justify-between pl-4 pr-[15px] border-l-2 border-[#c8c8c8] text-[#bbb]">
      {['M0 0h2v14H0zM12 0v14L4 7z', 'M10 0v14L2 7z', 'M2 0v14l8-7z', 'M0 0v14l8-7zM10 0h2v14h-2z'].map((d, i) => (
        <button key={d} aria-label={['第一张', '上一张', '下一张', '最后一张'][i]}>
          <svg width="12" height="14" fill="currentColor" aria-hidden="true"><path d={d} /></svg>
        </button>
      ))}
    </div>
    <div className="w-[154px] h-full flex items-center gap-5 pl-4 border-l-2 border-[#c8c8c8] text-[#bbb]">
      <button aria-label="显示工作表排序程序">
        <svg width="22" height="22" fill="currentColor" aria-hidden="true">
          <path d="M0 0h6v6H0zM8 0h6v6H8zM16 0h6v6h-6zM0 8h6v6H0zM8 8h6v6H8zM16 8h6v6h-6zM0 16h6v6H0zM8 16h6v6H8zM16 16h6v6h-6z" />
        </svg>
      </button>
      <button aria-label="显示缩略图">
        <svg width="22" height="22" fill="currentColor" aria-hidden="true">
          <path d="M0 0h22v14H0zM0 16h6v6H0zM8 16h6v6H8zM16 16h6v6h-6z" />
        </svg>
      </button>
      <button aria-label="显示标签">
        <svg width="22" height="22" fill="#666" aria-hidden="true"><path d="M0 0h22v22H0z" /></svg>
      </button>
    </div>
    <span className="absolute right-[10px] top-2 text-base leading-6 text-white/50 font-['Liberation_Sans',sans-serif] [text-shadow:1px_1px_1px_#c4c4c4] pointer-events-none">
      https://blog.csdn.net/qq_39633239
    </span>
  </footer>
)

const App = () => {
  return (
    <div className="relative min-h-screen flex flex-col bg-[#f4f4f4] font-['Noto_Sans_CJK_SC',sans-serif]">
      <Toolbar />
      <div className="flex-1 flex">
        <DataPane />
        <Cards />
        <Worksheet />
      </div>
      <SheetTabs />
      <StatusBar />
      <ShowMe />
    </div>
  )
}

export default App
